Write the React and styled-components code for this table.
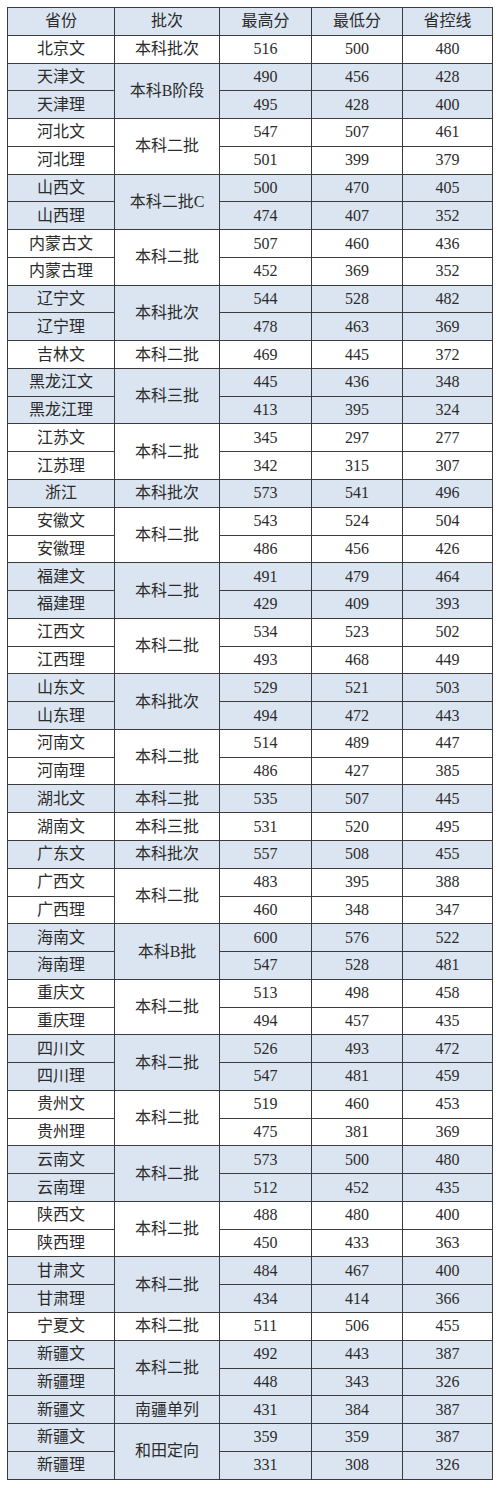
import React from 'react';
import styled, { createGlobalStyle } from 'styled-components';

const GlobalStyle = createGlobalStyle`
  html, body {
    margin: 0;
    padding: 0;
    background: #ffffff;
  }
`;

// each group: batch name, shaded or not, rows [province, max, min, line]
const groups = [
  ['本科批次', false, [['北京文', 516, 500, 480]]],
  ['本科B阶段', true, [['天津文', 490, 456, 428], ['天津理', 495, 428, 400]]],
  ['本科二批', false, [['河北文', 547, 507, 461], ['河北理', 501, 399, 379]]],
  ['本科二批C', true, [['山西文', 500, 470, 405], ['山西理', 474, 407, 352]]],
  ['本科二批', false, [['内蒙古文', 507, 460, 436], ['内蒙古理', 452, 369, 352]]],
  ['本科批次', true, [['辽宁文', 544, 528, 482], ['辽宁理', 478, 463, 369]]],
  ['本科二批', false, [['吉林文', 469, 445, 372]]],
  ['本科三批', true, [['黑龙江文', 445, 436, 348], ['黑龙江理', 413, 395, 324]]],
  ['本科二批', false, [['江苏文', 345, 297, 277], ['江苏理', 342, 315, 307]]],
  ['本科批次', true, [['浙江', 573, 541, 496]]],
  ['本科二批', false, [['安徽文', 543, 524, 504], ['安徽理', 486, 456, 426]]],
  ['本科二批', true, [['福建文', 491, 479, 464], ['福建理', 429, 409, 393]]],
  ['本科二批', false, [['江西文', 534, 523, 502], ['江西理', 493, 468, 449]]],
  ['本科批次', true, [['山东文', 529, 521, 503], ['山东理', 494, 472, 443]]],
  ['本科二批', false, [['河南文', 514, 489, 447], ['河南理', 486, 427, 385]]],
  ['本科二批', true, [['湖北文', 535, 507, 445]]],
  ['本科三批', false, [['湖南文', 531, 520, 495]]],
  ['本科批次', true, [['广东文', 557, 508, 455]]],
  ['本科二批', false, [['广西文', 483, 395, 388], ['广西理', 460, 348, 347]]],
  ['本科B批', true, [['海南文', 600, 576, 522], ['海南理', 547, 528, 481]]],
  ['本科二批', false, [['重庆文', 513, 498, 458], ['重庆理', 494, 457, 435]]],
  ['本科二批', true, [['四川文', 526, 493, 472], ['四川理', 547, 481, 459]]],
  ['本科二批', false, [['贵州文', 519, 460, 453], ['贵州理', 475, 381, 369]]],
  ['本科二批', true, [['云南文', 573, 500, 480], ['云南理', 512, 452, 435]]],
  ['本科二批', false, [['陕西文', 488, 480, 400], ['陕西理', 450, 433, 363]]],
  ['本科二批', true, [['甘肃文', 484, 467, 400], ['甘肃理', 434, 414, 366]]],
  ['本科二批', false, [['宁夏文', 511, 506, 455]]],
  ['本科二批', true, [['新疆文', 492, 443, 387], ['新疆理', 448, 343, 326]]],
  ['南疆单列', true, [['新疆文', 431, 384, 387]]],
  ['和田定向', true, [['新疆文', 359, 359, 387], ['新疆理', 331, 308, 326]]],
];

const headers = ['省份', '批次', '最高分', '最低分', '省控线'];
const widths = [107, 105, 92, 91, 90];

const App = () => (
  <Page>
    <GlobalStyle />
    <Table>
      <colgroup>
        {widths.map((w, i) => (
          <col key={i} style={{ width: w }} />
        ))}
      </colgroup>
      <thead>
        <tr>
          {headers.map((h) => (
            <Cell as="th" key={h} $shade>
              {h}
            </Cell>
          ))}
        </tr>
      </thead>
      <tbody>
        {groups.map(([batch, shade, rows], g) =>
          rows.map(([prov, max, min, line], i) => (
            <tr key={`${g}-${i}`}>
              <Cell $shade={shade}>{prov}</Cell>
              {i === 0 && (
                <Cell $shade={shade} rowSpan={rows.length}>
                  {batch}
                </Cell>
              )}
              <Cell $shade={shade}>{max}</Cell>
              <Cell $shade={shade}>{min}</Cell>
              <Cell $shade={shade}>{line}</Cell>
            </tr>
          ))
        )}
      </tbody>
    </Table>
  </Page>
);

export default App;

const Page = styled.div`
  padding: 7px 8px 9px 7px;
  width: 500px;
  box-sizing: border-box;
`;

const Table = styled.table`
  width: 485px;
  border-collapse: collapse;
  table-layout: fixed;
  font-family: 'Liberation Serif', 'Noto Sans CJK SC', serif;
  font-size: 16px;
  color: #2b2b2b;
`;

const Cell = styled.td`
  height: 27.77px;
  padding: 0;
  box-sizing: border-box;
  border: 1.5px solid #3c3c3c;
  text-align: center;
  vertical-align: middle;
  font-weight: normal;
  line-height: 1;
  background: ${(p) => (p.$shade ? '#dbe5f1' : '#ffffff')};
`;
